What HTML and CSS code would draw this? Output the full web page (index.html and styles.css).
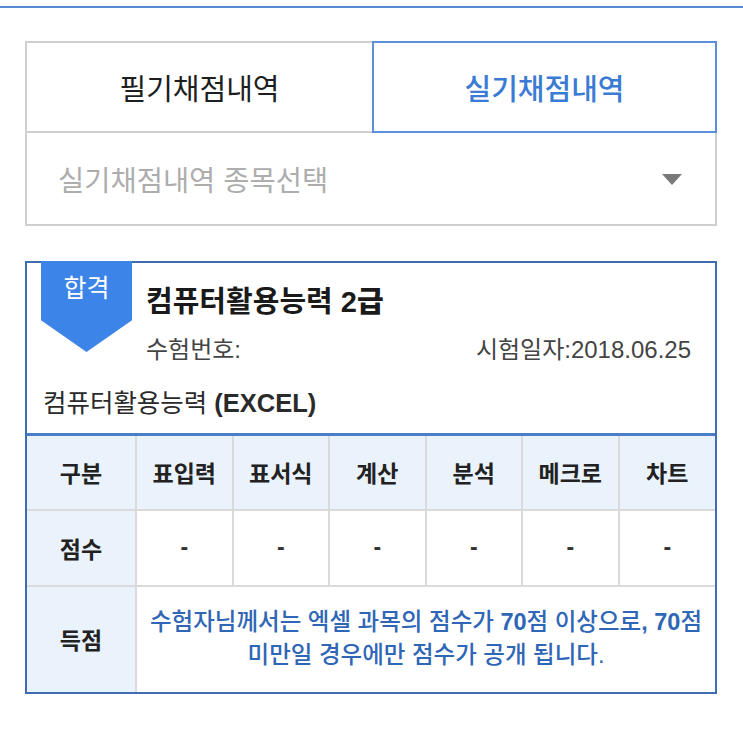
FILE: index.html
```html
<!DOCTYPE html>
<html lang="ko">
<head>
<meta charset="utf-8">
<title>실기채점내역</title>
<link rel="stylesheet" href="styles.css">
</head>
<body>
<div class="topline"></div>
<main class="page">
  <nav class="tabs">
    <a class="tab">필기채점내역</a>
    <a class="tab tab-active">실기채점내역</a>
  </nav>
  <div class="select">
    <span class="select-text">실기채점내역 종목선택</span>
    <span class="select-arrow"></span>
  </div>

  <section class="card">
    <div class="badge">합격</div>
    <div class="card-head">
      <div class="head-main">
        <h2 class="title">컴퓨터활용능력 <b>2급</b></h2>
        <div class="meta">
          <span>수험번호:</span>
          <span>시험일자:2018.06.25</span>
        </div>
      </div>
      <p class="subject">컴퓨터활용능력 <b>(EXCEL)</b></p>
    </div>
    <table class="score">
      <colgroup>
        <col class="col-label">
        <col><col><col><col><col><col>
      </colgroup>
      <tr class="row-head">
        <th>구분</th>
        <th>표입력</th>
        <th>표서식</th>
        <th>계산</th>
        <th>분석</th>
        <th>메크로</th>
        <th>차트</th>
      </tr>
      <tr class="row-score">
        <th>점수</th>
        <td>-</td><td>-</td><td>-</td><td>-</td><td>-</td><td>-</td>
      </tr>
      <tr class="row-total">
        <th>득점</th>
        <td colspan="6" class="notice">수험자님께서는 엑셀 과목의 점수가 <b>70</b>점 이상으로<b>,</b> <b>70</b>점<br>미만일 경우에만 점수가 공개 됩니다.</td>
      </tr>
    </table>
  </section>
</main>
</body>
</html>
```

FILE: styles.css
```css
* { box-sizing: border-box; }
html, body { margin: 0; padding: 0; background: #fff; }
body {
  font-family: "Liberation Sans", "Noto Sans CJK KR", sans-serif;
  color: #222;
}
.topline {
  height: 8px;
  border-bottom: 2px solid #5a8ad2;
}
.page {
  padding: 33px 26px 0 25px;
}
.tabs {
  display: grid;
  grid-template-columns: 347px 1fr;
  height: 92px;
}
.tab {
  display: flex;
  align-items: center;
  justify-content: center;
  font-size: 29px;
  color: #1e1e1e;
  border: 2px solid #cfcfcf;
  border-right: none;
}
.tab-active {
  color: #3a7bd5;
  font-weight: 500;
  border: 2px solid #5b8fd6;
}
.select {
  height: 93px;
  border: 2px solid #cfcfcf;
  border-top: none;
  display: flex;
  align-items: center;
  justify-content: space-between;
  padding: 0 33px 0 31px;
}
.select-text {
  font-size: 28.5px;
  color: #adadad;
}
.select-arrow {
  width: 0;
  height: 0;
  border-left: 10px solid transparent;
  border-right: 10px solid transparent;
  border-top: 11px solid #7a7a7a;
  margin-top: 2px;
}
.card {
  position: relative;
  margin-top: 35px;
  border: 2px solid #3f6db2;
}
.badge {
  position: absolute;
  left: 14px;
  top: -2px;
  width: 91px;
  height: 91px;
  background: #3d84e8;
  clip-path: polygon(0 0, 100% 0, 100% 65%, 50% 100%, 0 65%);
  color: #fff;
  font-size: 25px;
  text-align: center;
  padding-top: 11px;
  line-height: 32px;
}
.card-head {
  padding: 21px 24px 14px 16px;
}
.head-main {
  margin-left: 103px;
}
.title {
  margin: 0;
  font-size: 29px;
  line-height: 36px;
  font-weight: 700;
  color: #1a1a1a;
}
.meta {
  display: flex;
  justify-content: space-between;
  margin-top: 15px;
  font-size: 24px;
  line-height: 30px;
  color: #444;
}
.subject {
  margin: 22px 0 0;
  font-size: 25.5px;
  line-height: 32px;
  color: #2a2a2a;
}
.score {
  width: 100%;
  border-collapse: collapse;
  table-layout: fixed;
  border-top: 3px solid #4a7fc8;
}
.col-label { width: 109px; }
.score th, .score td {
  border: 2px solid #dadada;
  text-align: center;
  font-size: 23px;
  padding: 0;
}
.score tr > :first-child { border-left: none; }
.score tr > :last-child { border-right: none; }
.score tr:last-child > * { border-bottom: none; }
.score th {
  font-weight: 700;
  color: #222;
  background: #eaf2fc;
}
.row-head { height: 75px; }
.row-score { height: 76px; }
.row-total { height: 106px; }
.row-score td { background: #fff; color: #333; font-weight: 700; }
.notice {
  background: #fff;
  color: #2f66b6;
  font-size: 23.5px !important;
  line-height: 33px;
  font-weight: 500;
}
.notice b { font-weight: 700; }
```
